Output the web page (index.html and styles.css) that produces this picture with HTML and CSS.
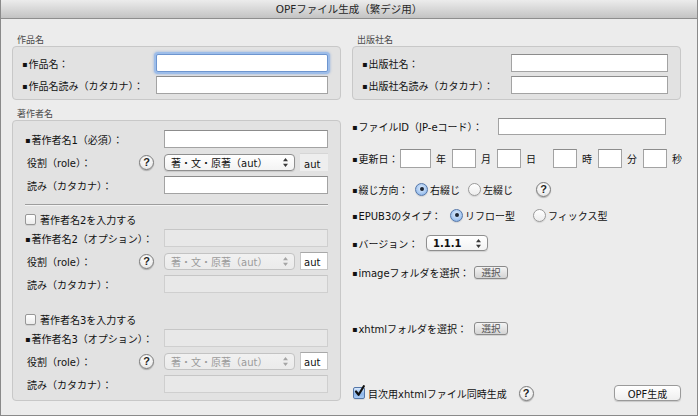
FILE: index.html
```html
<!DOCTYPE html>
<html lang="ja">
<head>
<meta charset="utf-8">
<title>OPFファイル生成（繁デジ用）</title>
<link rel="stylesheet" href="styles.css">
</head>
<body>
<div class="window">
  <div class="titlebar">OPFファイル生成（繁デジ用）</div>
  <div class="content">
    <div class="col">
      <div class="legend">作品名</div>
      <div class="box box-work">
        <div class="frow"><span class="lab lab-work"><span class="sq">▪</span>作品名：</span><input class="field focus grow" type="text"></div>
        <div class="frow"><span class="lab lab-work"><span class="sq">▪</span>作品名読み（カタカナ）：</span><input class="field grow" type="text"></div>
      </div>

      <div class="legend legend-author">著作者名</div>
      <div class="box box-author">
        <div class="arow first"><span class="lab lab-a"><span class="sq">▪</span>著作者名1（必須）：</span><input class="field grow" type="text"></div>
        <div class="arow"><span class="lab lab-sub">役割（role）：</span><span class="help">?</span><span class="popup">著・文・原著（aut）<svg class="arrows" width="5" height="9" viewBox="0 0 5 9"><path d="M2.5 0L5 3.2H0z M2.5 9L0 5.8h5z" fill="#3a3a3a"/></svg></span><span class="aut">aut</span></div>
        <div class="arow"><span class="lab lab-a lab-indent">読み（カタカナ）：</span><input class="field grow" type="text"></div>
        <div class="sep"></div>

        <div class="checkrow"><span class="check"></span>著作者名2を入力する</div>
        <div class="arow after-check"><span class="lab lab-a"><span class="sq">▪</span>著作者名2（オプション）：</span><input class="field grow" type="text" disabled></div>
        <div class="arow"><span class="lab lab-sub">役割（role）：</span><span class="help">?</span><span class="popup disabled">著・文・原著（aut）<svg class="arrows" width="5" height="9" viewBox="0 0 5 9"><path d="M2.5 0L5 3.2H0z M2.5 9L0 5.8h5z" fill="#a5a5a5"/></svg></span><span class="aut white">aut</span></div>
        <div class="arow"><span class="lab lab-a lab-indent">読み（カタカナ）：</span><input class="field grow" type="text" disabled></div>

        <div class="checkrow second"><span class="check"></span>著作者名3を入力する</div>
        <div class="arow after-check"><span class="lab lab-a"><span class="sq">▪</span>著作者名3（オプション）：</span><input class="field grow" type="text" disabled></div>
        <div class="arow"><span class="lab lab-sub">役割（role）：</span><span class="help">?</span><span class="popup disabled">著・文・原著（aut）<svg class="arrows" width="5" height="9" viewBox="0 0 5 9"><path d="M2.5 0L5 3.2H0z M2.5 9L0 5.8h5z" fill="#a5a5a5"/></svg></span><span class="aut white">aut</span></div>
        <div class="arow"><span class="lab lab-a lab-indent">読み（カタカナ）：</span><input class="field grow" type="text" disabled></div>
      </div>
    </div>

    <div class="col">
      <div class="legend">出版社名</div>
      <div class="box box-pub">
        <div class="frow"><span class="lab lab-pub"><span class="sq">▪</span>出版社名：</span><input class="field grow" type="text"></div>
        <div class="frow"><span class="lab lab-pub"><span class="sq">▪</span>出版社名読み（カタカナ）：</span><input class="field grow" type="text"></div>
      </div>

      <div class="rrow r-id"><span class="lab lab-id"><span class="sq">▪</span>ファイルID（JP-eコード）：</span><input class="field id-field" type="text"></div>

      <div class="rrow r-date">
        <span class="lab lab-date"><span class="sq">▪</span>更新日：</span>
        <input class="field date year" type="text"><span class="unit">年</span>
        <input class="field date" type="text"><span class="unit">月</span>
        <input class="field date" type="text"><span class="unit wide">日</span>
        <input class="field date" type="text"><span class="unit">時</span>
        <input class="field date" type="text"><span class="unit">分</span>
        <input class="field date" type="text"><span class="unit last">秒</span>
      </div>

      <div class="rrow r-dir">
        <span class="lab lab-dir"><span class="sq">▪</span>綴じ方向：</span>
        <span class="opt"><span class="radio on"></span>右綴じ</span>
        <span class="opt opt-left"><span class="radio"></span>左綴じ</span>
        <span class="help help-dir">?</span>
      </div>

      <div class="rrow r-type">
        <span class="lab lab-type"><span class="sq">▪</span>EPUB3のタイプ：</span>
        <span class="opt"><span class="radio on"></span>リフロー型</span>
        <span class="opt opt-fix"><span class="radio"></span>フィックス型</span>
      </div>

      <div class="rrow r-ver">
        <span class="lab lab-ver"><span class="sq">▪</span>バージョン：</span>
        <span class="popup ver">1.1.1<svg class="arrows" width="5" height="9" viewBox="0 0 5 9"><path d="M2.5 0L5 3.2H0z M2.5 9L0 5.8h5z" fill="#3a3a3a"/></svg></span>
      </div>

      <div class="rrow r-img">
        <span class="lab lab-folder"><span class="sq">▪</span>imageフォルダを選択：</span>
        <button class="pick" type="button">選択</button>
      </div>

      <div class="rrow r-xhtml">
        <span class="lab lab-folder"><span class="sq">▪</span>xhtmlフォルダを選択：</span>
        <button class="pick" type="button">選択</button>
      </div>

      <div class="rrow r-bottom">
        <div class="toc">
          <span class="check on"><svg width="13" height="13" viewBox="0 0 13 13"><path d="M3 6.5L5.6 9.8L10.8 1.2" stroke="#111" stroke-width="2.2" fill="none" stroke-linecap="round" stroke-linejoin="round"/></svg></span>
          <span class="toc-text">目次用xhtmlファイル同時生成</span>
          <span class="help help-toc">?</span>
        </div>
        <button class="gen" type="button">OPF生成</button>
      </div>
    </div>
  </div>
</div>
</body>
</html>
```
FILE: styles.css
```css
* { box-sizing: border-box; }
html, body { margin: 0; padding: 0; }
body {
  width: 698px;
  height: 416px;
  overflow: hidden;
  background: #ececec;
  font-family: "DejaVu Sans", "Noto Sans CJK JP", sans-serif;
  font-size: 10px;
  color: #111;
}
.window {
  width: 698px;
  height: 416px;
  border: 1px solid #8a8a8a;
  border-top: none;
  background: #ececec;
  display: flex;
  flex-direction: column;
}
.titlebar {
  flex: none;
  height: 19px;
  background: linear-gradient(#ececec, #d6d6d6 55%, #c3c3c3);
  border-bottom: 1px solid #8e8e8e;
  text-align: center;
  font-size: 10.5px;
  line-height: 18px;
  color: #262626;
}
.content {
  display: flex;
  gap: 11px;
  padding: 15px 0 0 11px;
}
.col {
  width: 329px;
  display: flex;
  flex-direction: column;
}
.legend {
  height: 12px;
  line-height: 12px;
  padding-left: 5px;
  font-size: 9px;
  color: #4a4a4a;
}
.legend-author { margin-top: 8px; }
.box {
  border: 1px solid #c8c8c8;
  border-radius: 4px;
  background: #e2e2e2;
}
.box-work { padding: 7px 12px 5px 9px; }
.box-pub { padding: 7px 12px 5px 9px; }
.box-author { padding: 9px 12px 7px 12px; }

.lab { white-space: nowrap; flex: none; }
.sq {
  font-size: 8px;
  vertical-align: 1px;
  margin-right: 1px;
}
.frow, .arow, .rrow {
  display: flex;
  align-items: center;
}
.frow { height: 18px; }
.frow + .frow { margin-top: 4px; }
.lab-work { width: 134px; }
.lab-pub { width: 149px; }
.grow { flex: 1; min-width: 0; }

.field {
  -webkit-appearance: none;
  appearance: none;
  margin: 0;
  height: 18px;
  border: 1px solid #a3a3a3;
  border-top-color: #8c8c8c;
  background: #fff;
  border-radius: 0;
  outline: none;
  padding: 0;
  font: inherit;
}
.field:disabled {
  background: #e8e8e8;
  border-color: #cfcfcf;
  border-top-color: #c6c6c6;
}
.field.focus {
  border-color: #6d95cf;
  border-radius: 2px;
  box-shadow: 0 0 0 2px #9dbde9, 0 0 2px 3px rgba(120,160,220,.35);
}

/* author box */
.arow { height: 18px; margin-top: 5px; }
.arow.first { margin-top: 0; }
.arow.after-check { margin-top: 4px; }
.lab-a { width: 139px; }
.lab-sub { width: 114px; padding-left: 2px; }
.lab-indent { padding-left: 2px; }
.help {
  flex: none;
  width: 15px;
  height: 15px;
  margin-right: 10px;
  border: 1px solid #7b7b7b;
  border-radius: 50%;
  background: radial-gradient(circle at 50% 35%, #ffffff, #f1f1f1 55%, #d9d9d9);
  box-shadow: 0 1px 1px rgba(0,0,0,.25);
  display: flex;
  align-items: center;
  justify-content: center;
  font-family: "Liberation Sans", sans-serif;
  font-weight: bold;
  font-size: 11px;
  line-height: 1;
  color: #1e1e1e;
}
.popup {
  flex: none;
  position: relative;
  width: 131px;
  height: 17px;
  border: 1px solid #8f8f8f;
  border-radius: 4px;
  background: linear-gradient(#ffffff, #f3f3f3);
  box-shadow: 0 1px 1px rgba(0,0,0,.12);
  display: flex;
  align-items: center;
  padding-left: 6px;
  white-space: nowrap;
  color: #111;
}
.popup .arrows {
  position: absolute;
  right: 6px;
  top: 3px;
}
.popup.disabled {
  border-color: #c3c3c3;
  background: linear-gradient(#f1f1f1, #ebebeb);
  color: #9b9b9b;
  box-shadow: none;
}
.aut {
  flex: none;
  width: 28px;
  height: 18px;
  margin-left: 5px;
  background: #eeeeee;
  border-top: 1px solid #d6d6d6;
  padding: 5px 0 0 4px;
  line-height: 11px;
  color: #111;
}
.aut.white {
  background: #fff;
  border: 1px solid #c6c6c6;
  border-top-color: #a8a8a8;
  padding: 4px 0 0 3px;
}
.sep {
  margin-top: 10px;
  height: 2px;
  border-top: 1px solid #9d9d9d;
  border-bottom: 1px solid #f3f3f3;
}
.checkrow {
  display: flex;
  align-items: center;
  height: 12px;
  margin-top: 7px;
  white-space: nowrap;
}
.checkrow.second { margin-top: 20px; }
.check {
  flex: none;
  width: 11px;
  height: 11px;
  margin-right: 4px;
  border: 1px solid #979797;
  border-radius: 2px;
  background: linear-gradient(#ffffff, #ececec);
  box-shadow: 0 1px 0 rgba(0,0,0,.08);
}
.check.on {
  position: relative;
  width: 12px;
  height: 12px;
  border-color: #5577a9;
  background: linear-gradient(#d8e8fb, #8db6ea 60%, #a9cbf4);
}
.check.on svg {
  position: absolute;
  left: -1px;
  top: -3px;
}

/* right column */
.rrow { height: 20px; }
.r-id { margin-top: 16px; }
.r-date { margin-top: 12px; }
.r-dir { margin-top: 11px; }
.r-type { margin-top: 6px; }
.r-ver { margin-top: 8px; }
.r-img { margin-top: 9px; }
.r-xhtml { margin-top: 36px; }
.r-bottom { margin-top: 45px; justify-content: space-between; }

.lab-id { width: 146px; }
.id-field { width: 168px; height: 17px; }
.lab-date { width: 48px; }
.field.date { width: 24px; height: 19px; }
.field.date.year { width: 31px; }
.unit { flex: none; margin: 0 6px 0 5px; }
.unit.wide { margin-right: 17px; }
.unit.last { margin-right: 0; }

.lab-dir { width: 63px; }
.lab-type { width: 98px; }
.opt {
  display: flex;
  align-items: center;
  white-space: nowrap;
}
.opt-left { margin-left: 8px; }
.opt-fix { margin-left: 18px; }
.radio {
  flex: none;
  position: relative;
  width: 13px;
  height: 13px;
  margin-right: 2px;
  border: 1px solid #9a9a9a;
  border-radius: 50%;
  background: linear-gradient(#ffffff, #ececec);
  box-shadow: 0 1px 1px rgba(0,0,0,.1);
}
.radio.on {
  border-color: #5577a9;
  background: radial-gradient(circle at 50% 40%, #e2eefc, #a6c7f0 60%, #6f9fdc);
}
.radio.on::after {
  content: "";
  position: absolute;
  left: 3.5px;
  top: 3.5px;
  width: 4px;
  height: 4px;
  border-radius: 50%;
  background: #1c2533;
}
.help-dir { margin-left: 23px; margin-right: 0; }

.lab-ver { width: 74px; }
.popup.ver {
  width: 62px;
  height: 16px;
  padding-left: 6px;
  font-weight: bold;
  font-size: 10px;
}
.popup.ver .arrows { top: 3px; }

.lab-folder { width: 122px; }
.pick {
  flex: none;
  margin: 0;
  width: 34px;
  height: 13px;
  padding: 0;
  border: 1px solid #8a8a8a;
  border-radius: 3px;
  background: linear-gradient(#f4f4f4, #d4d4d4);
  box-shadow: 0 1px 0 rgba(0,0,0,.1);
  font: inherit;
  font-size: 9.5px;
  line-height: 11px;
  color: #555;
}

.toc {
  display: flex;
  align-items: center;
  padding-left: 1px;
}
.toc .check.on { margin-right: 3px; }
.toc-text { white-space: nowrap; }
.help-toc { margin-left: 12px; margin-right: 0; }
.gen {
  margin: 0;
  width: 67px;
  height: 16px;
  padding: 0;
  border: 1px solid #9a9a9a;
  border-radius: 4px;
  background: linear-gradient(#ffffff, #efefef);
  box-shadow: 0 1px 1px rgba(0,0,0,.15);
  font: inherit;
  color: #111;
}
```
